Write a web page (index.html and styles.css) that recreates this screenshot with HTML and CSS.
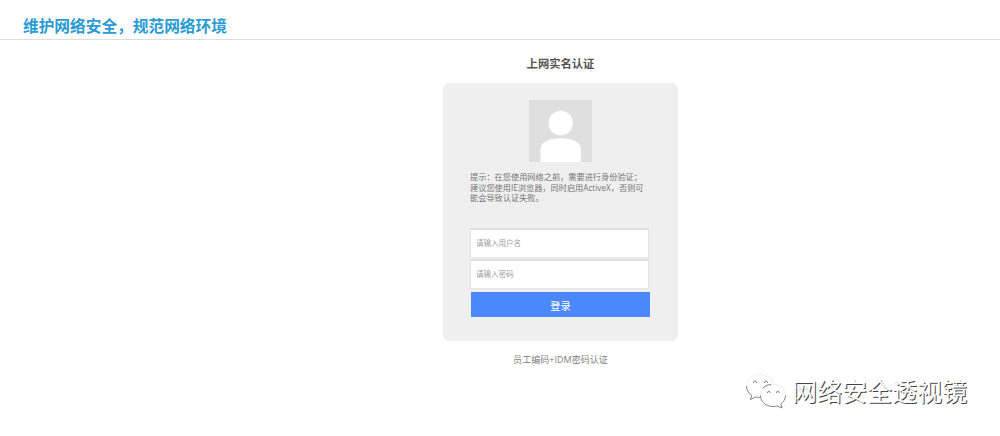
FILE: index.html
```html
<!DOCTYPE html>
<html lang="zh-CN">
<head>
    <meta charset="UTF-8">
    <meta name="viewport" content="width=device-width, initial-scale=1.0">
    <title>上网实名认证</title>
    <link rel="stylesheet" href="styles.css">
</head>
<body>
    <div class="header">维护网络安全，规范网络环境</div>
    <div class="main">
        <h1>上网实名认证</h1>
        <form class="login-box" autocomplete="off">
            <svg class="avatar" viewBox="0 0 63 62">
                <rect width="63" height="62" fill="#dfdfdf"/>
                <circle cx="31.7" cy="23" r="12.2" fill="#fff"/>
                <path d="M11.5 62V49C11.5 42 21 38.3 31.7 38.3S52 42 52 49V62Z" fill="#fff"/>
            </svg>
            <p class="tip">提示：在您使用网络之前，需要进行身份验证；<br>建议您使用IE浏览器，同时启用ActiveX，否则可<br>能会导致认证失败。</p>
            <input type="text" name="user" placeholder="请输入用户名">
            <input type="password" name="pwd" placeholder="请输入密码">
            <button type="button">登录</button>
        </form>
        <div class="note">员工编码+IDM密码认证</div>
    </div>
    <div class="watermark">
        <svg class="wechat" viewBox="0 0 42 36">
            <path class="light" d="M28 11.500C27.500 5.500 22 1.500 14.500 1.500C7 1.500 1.500 6.500 1.500 13"/>
            <path class="dark" d="M1.500 13c0 4 2 7 5.200 9.200L5.500 26.500l5-2.500c1.500.4 3 .5 4.800.3"/>
            <path class="light" d="M15.500 22.500c0-6.200 5.500-11 12.500-11s12.500 4.800 12.500 11"/>
            <path class="dark" d="M15.500 22.500C15.500 28.700 21 33.500 28 33.500c1.500 0 3-.2 4.300-.6l4.700 2.100-1.200-4C38.500 29 40.500 26 40.500 22.500M17.500 15.500c2-2.500 5-3.800 8.500-4"/>
            <path class="dark" d="M8.300 10q.3-2 1.700-2t1.700 2M19.300 10q.3-2 1.700-2t1.700 2M22.300 20q.3-1.800 1.500-1.800t1.500 1.800M31.300 20q.3-1.800 1.500-1.800t1.500 1.800"/>
        </svg>
        <span>网络安全透视镜</span>
    </div>
</body>
</html>
```

FILE: styles.css
```css
body{
    margin: 0;
    height: 436px;
    overflow: hidden;
    background-color: #fff;
    font-family: "Open Sans", "Noto Sans CJK SC", sans-serif;
}

.header{
    box-sizing: border-box;
    height: 40px;
    padding: 14px 0 0 23px;
    border-bottom: 1px solid #dedede;
    color: #2b9bd3;
    font-size: 15.7px;
    line-height: 24px;
    font-weight: bold;
}

.main{
    width: 235px;
    margin-left: 443px;
    text-align: center;
}
h1{
    margin: 0;
    padding: 14px 0 9px;
    color: #555;
    font-size: 11.3px;
    line-height: 20px;
}

.login-box{
    box-sizing: border-box;
    display: flex;
    flex-direction: column;
    height: 258px;
    padding: 17px 28px 0 27px;
    border-radius: 6px;
    background-color: #efefef;
}
.avatar{
    width: 63px;
    height: 62px;
    margin-left: 59px;
}
.tip{
    margin: 10px 0 24px;
    color: #777;
    font-size: 8.2px;
    line-height: 10.6px;
    text-align: left;
    white-space: nowrap;
}

input{
    box-sizing: border-box;
    width: 179px;
    height: 30px;
    margin: 0 0 1px;
    padding: 0 5px;
    border: 1px solid #e5e5e8;
    border-top: 2px solid #dedfe1;
    background-color: #fff;
    font-family: inherit;
    font-size: 7.5px;
}
input::placeholder{
    color: #a0a0a0;
}

button{
    width: 179px;
    height: 25px;
    margin: 2px 0 0 1px;
    padding: 3px 0 0;
    border: none;
    background-color: #4a88fb;
    color: #fff;
    font-family: inherit;
    font-size: 10.3px;
    line-height: 22px;
}

.note{
    padding-top: 9px;
    color: #808080;
    font-size: 9.05px;
    line-height: 20px;
}

/* account mark in the lower right corner */
.watermark{
    position: absolute;
    left: 745px;
    top: 372px;
    display: flex;
    align-items: center;
    gap: 5px;
    color: #fff;
    font-size: 25px;
    line-height: 38px;
    text-shadow: 1px 1px 0 #444;
}
.wechat{
    width: 42px;
    height: 36px;
}
.light, .dark{
    fill: none;
    stroke: #ddd;
    stroke-width: 0.6;
}
.dark{
    stroke: #666;
    stroke-width: 0.8;
}
```
